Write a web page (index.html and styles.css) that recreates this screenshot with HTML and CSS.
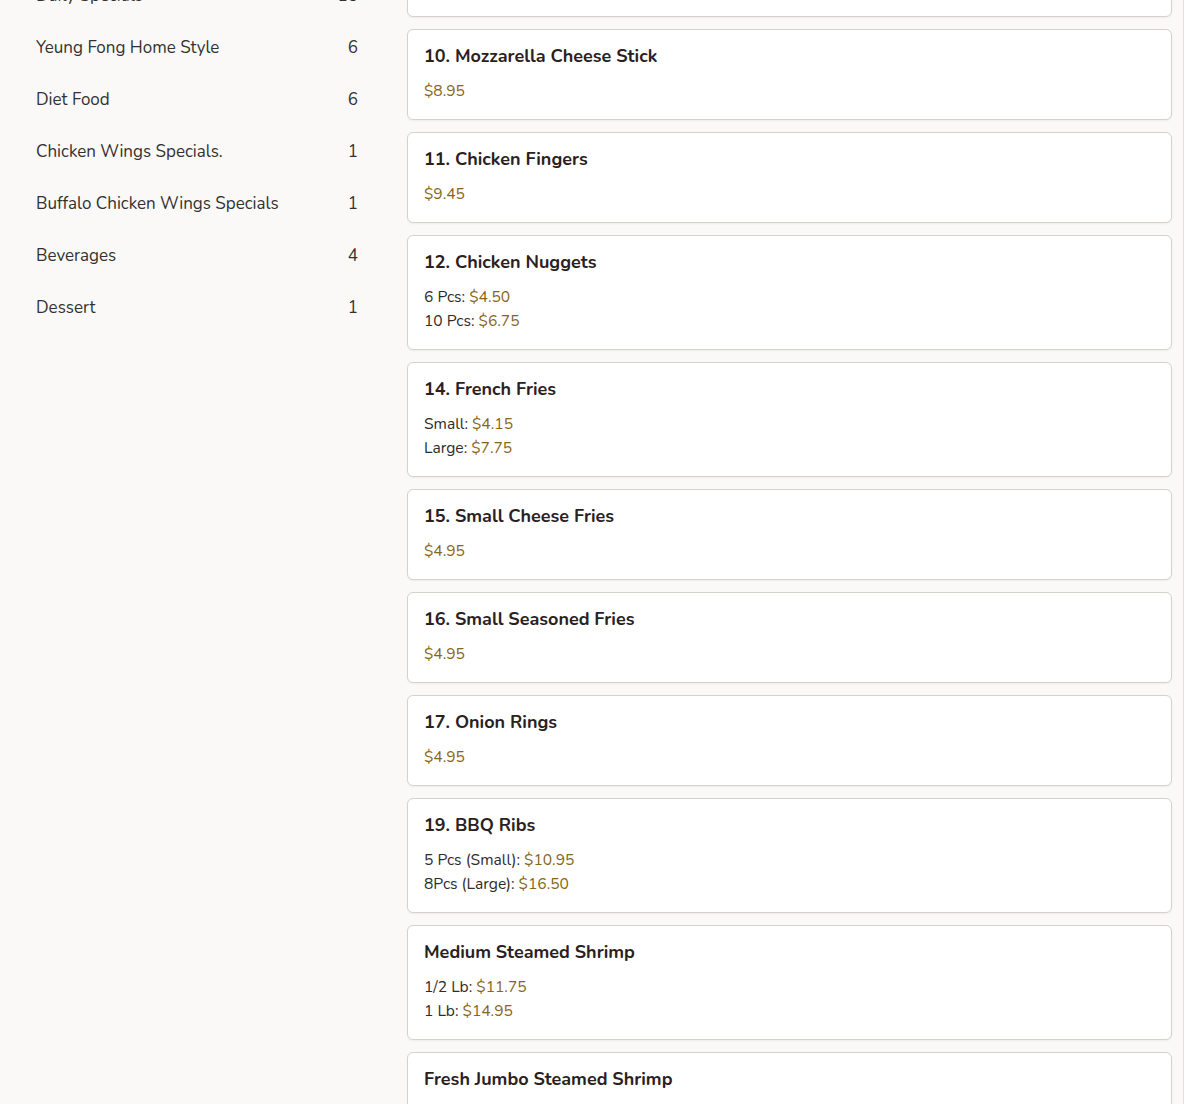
FILE: index.html
```html
<!DOCTYPE html>
<html lang="en">
<head>
<meta charset="utf-8">
<title>Menu</title>
<link rel="stylesheet" href="styles.css">
</head>
<body>
<div class="page">
  <aside class="sidebar">
    <ul class="cats">
      <li class="cat"><span class="cat-name">Daily Specials</span><span class="cat-count">15</span></li>
      <li class="cat"><span class="cat-name">Yeung Fong Home Style</span><span class="cat-count">6</span></li>
      <li class="cat"><span class="cat-name">Diet Food</span><span class="cat-count">6</span></li>
      <li class="cat"><span class="cat-name">Chicken Wings Specials.</span><span class="cat-count">1</span></li>
      <li class="cat"><span class="cat-name">Buffalo Chicken Wings Specials</span><span class="cat-count">1</span></li>
      <li class="cat"><span class="cat-name">Beverages</span><span class="cat-count">4</span></li>
      <li class="cat"><span class="cat-name">Dessert</span><span class="cat-count">1</span></li>
    </ul>
  </aside>
  <main class="items">
    <div class="card">
      <h3 class="title">9. Fried Chicken Wings</h3>
      <div class="line"><span class="price">$8.95</span></div>
    </div>
    <div class="card">
      <h3 class="title">10. Mozzarella Cheese Stick</h3>
      <div class="line"><span class="price">$8.95</span></div>
    </div>
    <div class="card">
      <h3 class="title">11. Chicken Fingers</h3>
      <div class="line"><span class="price">$9.45</span></div>
    </div>
    <div class="card">
      <h3 class="title">12. Chicken Nuggets</h3>
      <div class="line">6 Pcs: <span class="price">$4.50</span></div>
      <div class="line">10 Pcs: <span class="price">$6.75</span></div>
    </div>
    <div class="card">
      <h3 class="title">14. French Fries</h3>
      <div class="line">Small: <span class="price">$4.15</span></div>
      <div class="line">Large: <span class="price">$7.75</span></div>
    </div>
    <div class="card">
      <h3 class="title">15. Small Cheese Fries</h3>
      <div class="line"><span class="price">$4.95</span></div>
    </div>
    <div class="card">
      <h3 class="title">16. Small Seasoned Fries</h3>
      <div class="line"><span class="price">$4.95</span></div>
    </div>
    <div class="card">
      <h3 class="title">17. Onion Rings</h3>
      <div class="line"><span class="price">$4.95</span></div>
    </div>
    <div class="card">
      <h3 class="title">19. BBQ Ribs</h3>
      <div class="line">5 Pcs (Small): <span class="price">$10.95</span></div>
      <div class="line">8Pcs (Large): <span class="price">$16.50</span></div>
    </div>
    <div class="card">
      <h3 class="title">Medium Steamed Shrimp</h3>
      <div class="line">1/2 Lb: <span class="price">$11.75</span></div>
      <div class="line">1 Lb: <span class="price">$14.95</span></div>
    </div>
    <div class="card">
      <h3 class="title">Fresh Jumbo Steamed Shrimp</h3>
      <div class="line">1/2 Lb: <span class="price">$15.95</span></div>
      <div class="line">1 Lb: <span class="price">$26.95</span></div>
    </div>
  </main>
</div>
</body>
</html>
```
FILE: styles.css
```css
html, body {
  margin: 0;
  padding: 0;
  background: #ffffff;
  overflow: hidden;
}
body {
  font-family: "Nunito", Lato, "Noto Sans", sans-serif;
  color: #2b2522;
}
.page {
  display: flex;
  width: 1183px;
  border-right: 1px solid #e4e1dc;
  background: #faf9f7;
  margin-top: -74px;
  min-height: 1300px;
}
.sidebar {
  width: 382px;
  flex: none;
  box-sizing: border-box;
  padding: 43px 24px 0 36px;
}
.cats {
  list-style: none;
  margin: 0;
  padding: 0;
}
.cat {
  display: flex;
  justify-content: space-between;
  align-items: center;
  height: 52px;
  font-size: 17px;
  color: #333130;
}
.items {
  flex: none;
  width: 765px;
  margin-left: 25px;
  display: flex;
  flex-direction: column;
  gap: 12px;
}
.card {
  background: #ffffff;
  border: 1px solid #d5d2cd;
  border-radius: 6px;
  padding: 14px 16px 16px;
  box-shadow: 0 1px 2px rgba(0,0,0,0.05);
}
.title {
  margin: 0 0 11px;
  font-size: 18px;
  line-height: 24px;
  font-weight: 700;
  color: #2a211e;
}
.line {
  font-size: 15.6px;
  line-height: 24px;
  color: #2f2b29;
}
.price {
  color: #87661a;
}
```
